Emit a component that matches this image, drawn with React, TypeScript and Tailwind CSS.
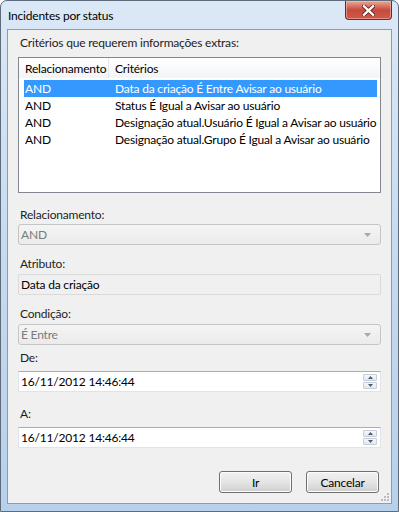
import React from 'react';

const rows = [
  { rel: 'AND', crit: 'Data da criação É Entre Avisar ao usuário' },
  { rel: 'AND', crit: 'Status É Igual a Avisar ao usuário' },
  { rel: 'AND', crit: 'Designação atual.Usuário É Igual a Avisar ao usuário' },
  { rel: 'AND', crit: 'Designação atual.Grupo É Igual a Avisar ao usuário' },
];

const font = { fontFamily: 'Lato, "Noto Sans", sans-serif' };

const Label = ({ text, className = '' }: { text: string; className?: string }) => (
  <div className={`h-[15px] pl-[12px] text-[12px] leading-[15px] text-[#1e1e1e] ${className}`}>{text}</div>
);

const Combo = ({ value, className = '' }: { value: string; className?: string }) => (
  <div
    className={`mx-[10px] flex h-[21px] items-center justify-between rounded-[3px] border border-[#c5c5c5] bg-gradient-to-b from-[#f4f4f4] to-[#ebebeb] pl-[2px] pr-[9px] ${className}`}
  >
    <span className="text-[12px] leading-[15px] text-[#7a7a7a]">{value}</span>
    <svg width="7" height="4" viewBox="0 0 7 4">
      <path d="M0 0 H7 L3.5 4 Z" fill="#a8a8a8" />
    </svg>
  </div>
);

const Spinner = () => (
  <div className="flex flex-col gap-[1px] pr-[3px]">
    {[0, 1].map((i) => (
      <div
        key={i}
        className="flex h-[7px] w-[14px] items-center justify-center rounded-[1px] border border-[#c4cdd8] bg-gradient-to-b from-[#f6f8fa] to-[#e3e8ee]"
      >
        <svg width="5" height="3" viewBox="0 0 5 3">
          <path d={i === 0 ? 'M0 3 L2.5 0 L5 3 Z' : 'M0 0 H5 L2.5 3 Z'} fill="#4d5a6a" />
        </svg>
      </div>
    ))}
  </div>
);

const DateBox = ({ value, className = '' }: { value: string; className?: string }) => (
  <div
    className={`mx-[10px] flex h-[21px] items-center justify-between border border-[#e2e3ea] border-t-[#abadb3] bg-white pl-[2px] ${className}`}
  >
    <span className="text-[12px] leading-[15px] text-black">{value}</span>
    <Spinner />
  </div>
);

const Button = ({ text }: { text: string }) => (
  <div className="relative flex h-[22px] w-[73px] items-center justify-center overflow-hidden rounded-[3px] border border-[#707070] bg-gradient-to-b from-[#f2f2f2] via-[#e5e5e5] to-[#cfcfcf] shadow-[inset_0_0_0_1px_#fcfcfc]">
    <span className="text-[12px] leading-[15px] text-black">{text}</span>
  </div>
);

export default function App() {
  return (
    <div
      className="flex h-[512px] w-[399px] flex-col overflow-hidden rounded-t-[7px] border border-[#5d6b7a] bg-gradient-to-b from-[#dbe8f6] via-[#c6daf0] to-[#b8d0ea] tracking-[-0.2px]"
      style={font}
    >
      {/* title bar */}
      <div className="flex h-[28px] shrink-0 items-start justify-between pl-[7px] pr-[6px]">
        <div className="pt-[7px] text-[12px] leading-[15px] text-black">Incidentes por status</div>
        <div className="flex h-[19px] w-[47px] items-center justify-center rounded-b-[4px] border border-t-0 border-[#6e2a22] bg-gradient-to-b from-[#e8a898] via-[#c74a3c] to-[#d0594a] shadow-[inset_0_0_0_1px_rgba(255,200,190,0.5)]">
          <svg width="13" height="11" viewBox="0 0 13 11">
            <path d="M1.5 1 L11.5 10 M11.5 1 L1.5 10" stroke="#5a2018" strokeWidth="4" strokeLinecap="round" />
            <path d="M1.8 1.2 L11.2 9.8 M11.2 1.2 L1.8 9.8" stroke="#ffffff" strokeWidth="2.4" strokeLinecap="round" />
          </svg>
        </div>
      </div>

      {/* client area */}
      <div className="mx-[6px] flex h-[475px] shrink-0 flex-col border border-[#8b9cb2] bg-[#f0f0f0]">
        <Label text="Critérios que requerem informações extras:" className="mt-[5px]" />

        <div className="mx-[10px] mt-[7px] flex h-[136px] flex-col overflow-hidden border border-[#828790] bg-white">
          <div className="flex h-[20px] shrink-0 bg-gradient-to-b from-white to-[#f3f4f6] text-[12px] leading-[15px] text-black">
            <div className="flex w-[90px] shrink-0 items-center border-r border-[#e3e6eb] pl-[6px]">Relacionamento</div>
            <div className="flex flex-1 items-center pl-[6px]">Critérios</div>
          </div>
          <div className="mt-[2px] flex flex-col">
            {rows.map((r, i) => (
              <div
                key={i}
                className={`ml-[5px] mr-[3px] flex h-[17px] items-center whitespace-nowrap text-[12px] leading-[15px] ${
                  i === 0 ? 'bg-[#3399ff] text-white' : 'text-black'
                }`}
              >
                <div className="w-[91px] shrink-0 pl-[1px]">{r.rel}</div>
                <div>{r.crit}</div>
              </div>
            ))}
          </div>
        </div>

        <Label text="Relacionamento:" className="mt-[14px]" />
        <Combo value="AND" className="mt-[2px]" />

        <Label text="Atributo:" className="mt-[11px]" />
        <div className="mx-[10px] mt-[3px] flex h-[21px] items-center rounded-[2px] border border-[#dadada] bg-[#f0f0f0] pl-[2px]">
          <span className="text-[12px] leading-[15px] text-black">Data da criação</span>
        </div>

        <Label text="Condição:" className="mt-[11px]" />
        <Combo value="É Entre" className="mt-[3px]" />

        <Label text="De:" className="mt-[5px]" />
        <DateBox value="16/11/2012 14:46:44" className="mt-[6px]" />

        <Label text="A:" className="mt-[14px]" />
        <DateBox value="16/11/2012 14:46:44" className="mt-[6px]" />

        <div className="mt-[23px] flex justify-end gap-[14px] pr-[12px]">
          <Button text="Ir" />
          <Button text="Cancelar" />
        </div>

        <div className="mt-auto flex justify-end pb-[2px] pr-[2px]">
          <svg width="8" height="8" viewBox="0 0 8 8">
            {[
              [6, 0],
              [6, 3],
              [3, 3],
              [6, 6],
              [3, 6],
              [0, 6],
            ].map(([x, y], i) => (
              <rect key={i} x={x} y={y} width="2" height="2" fill="#b8bcc4" />
            ))}
          </svg>
        </div>
      </div>
    </div>
  );
}
